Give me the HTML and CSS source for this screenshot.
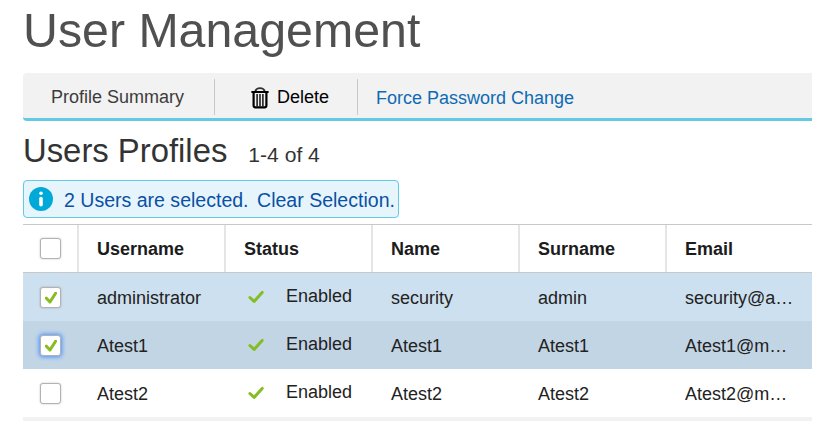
FILE: index.html
```html
<!DOCTYPE html>
<html lang="en">
<head>
<meta charset="utf-8">
<title>User Management</title>
<link rel="stylesheet" href="styles.css">
</head>
<body>
<svg class="defs" width="0" height="0" aria-hidden="true">
  <symbol id="tick" viewBox="0 0 16 14"><path d="M1.9 7.5 6.1 11.4 14.2 2.4" fill="none" stroke="#86bc25" stroke-width="3" stroke-linecap="round" stroke-linejoin="round"/></symbol>
  <symbol id="check" viewBox="0 0 12 12"><path d="M1.4 6.2 5 10 10.6 1.3" fill="none" stroke="#86bc1f" stroke-width="3" stroke-linecap="round" stroke-linejoin="round"/></symbol>
</svg>
<main class="page">
  <h1 class="title">User Management</h1>
  <nav class="toolbar">
    <a class="tool summary">Profile Summary</a>
    <a class="tool delete">
      <svg class="trash" width="18" height="22" viewBox="0 0 18 22"><path d="M4.3 4.2C5 2 6.5 1.2 9 1.2s4 .8 4.7 3" fill="none" stroke="#333" stroke-width="1.8"/><path d="M1.2 5h15.6M2.6 6v12.6q0 1.7 1.7 1.7h9.4q1.7 0 1.7-1.7V6" fill="none" stroke="#000" stroke-width="2.2" stroke-linecap="round"/><path d="M6.1 7v12.5M9 7v12.5M11.9 7v12.5" stroke="#111" stroke-width="1.5"/></svg>
      <span>Delete</span>
    </a>
    <a class="tool force">Force Password Change</a>
  </nav>
  <header class="subhead">
    <h2>Users Profiles</h2>
    <span class="count">1-4 of 4</span>
  </header>
  <div class="notice">
    <svg class="info" width="24" height="24" viewBox="0 0 24 24"><circle cx="12" cy="12" r="12" fill="#00a9d8"/><circle cx="12" cy="6.3" r="1.8" fill="#fff"/><path d="M12 11.5v6.2" stroke="#fff" stroke-width="3.6" stroke-linecap="round"/></svg>
    <span class="message">2 Users are selected.</span>
    <a class="clear">Clear Selection.</a>
  </div>
  <section class="grid">
    <div class="row head">
      <div class="cell pick"><span class="box"></span></div>
      <div class="cell">Username</div>
      <div class="cell">Status</div>
      <div class="cell">Name</div>
      <div class="cell">Surname</div>
      <div class="cell">Email</div>
    </div>
    <div class="row selected">
      <div class="cell pick"><span class="box"><svg width="12" height="12"><use href="#check"/></svg></span></div>
      <div class="cell">administrator</div>
      <div class="cell status"><svg width="16" height="14"><use href="#tick"/></svg><span>Enabled</span></div>
      <div class="cell">security</div>
      <div class="cell">admin</div>
      <div class="cell">security@a…</div>
    </div>
    <div class="row selected current">
      <div class="cell pick"><span class="box focus"><svg width="12" height="12"><use href="#check"/></svg></span></div>
      <div class="cell">Atest1</div>
      <div class="cell status"><svg width="16" height="14"><use href="#tick"/></svg><span>Enabled</span></div>
      <div class="cell">Atest1</div>
      <div class="cell">Atest1</div>
      <div class="cell">Atest1@m…</div>
    </div>
    <div class="row">
      <div class="cell pick"><span class="box"></span></div>
      <div class="cell">Atest2</div>
      <div class="cell status"><svg width="16" height="14"><use href="#tick"/></svg><span>Enabled</span></div>
      <div class="cell">Atest2</div>
      <div class="cell">Atest2</div>
      <div class="cell">Atest2@m…</div>
    </div>
    <div class="next-row"></div>
  </section>
</main>
</body>
</html>
```
FILE: styles.css
```css
* { box-sizing: border-box; }
body {
  margin: 0;
  height: 436px;
  overflow: hidden;
  background: #fff;
  color: #222;
  font: 18px/24px "Liberation Sans", Arial, sans-serif;
}
.defs { display: none; }
.page { width: 789px; margin-left: 23px; }
h1, h2 { margin: 0; font-weight: 400; }
.title {
  height: 73px;
  padding-top: 3px;
  color: #505050;
  font-size: 48.3px;
  line-height: 54px;
}
.toolbar {
  display: flex;
  height: 48px;
  padding-top: 6px;
  background: #f2f2f2;
  border-bottom: 3px solid #63cae3;
  border-radius: 4px 0 0 4px;
}
.tool { height: 36px; line-height: 36px; white-space: nowrap; }
.summary { width: 192px; padding-left: 28px; border-right: 1px solid #c8c8c8; color: #3c3c3c; }
.delete {
  display: flex;
  gap: 8px;
  width: 143px;
  padding-left: 36px;
  border-right: 1px solid #c8c8c8;
  color: #000;
}
.trash { margin-top: 8px; }
.force { padding: 1px 0 0 18px; color: #0f6ab4; }
.subhead {
  display: flex;
  align-items: baseline;
  gap: 21px;
  height: 59px;
  padding-top: 10px;
  color: #333;
}
.subhead h2 { font-size: 32.85px; line-height: 40px; }
.count { font-size: 21.1px; }
.notice {
  display: flex;
  align-items: center;
  width: 376px;
  height: 38px;
  padding-left: 5px;
  border: 1px solid #63cae3;
  border-radius: 4px;
  background: #e6f5fb;
  color: #0b50a5;
  font-size: 19.54px;
  white-space: nowrap;
}
.message { margin: 2px 0 0 11px; }
.clear { margin: 2px 0 0 8.5px; }
.grid { margin-top: 6px; }
.row { display: grid; grid-template-columns: 56px repeat(4, 147px) 145px; height: 48px; }
.cell { padding: 13px 0 0 18px; white-space: nowrap; }
.head {
  height: 49px;
  border-top: 1px solid #c8c8c8;
  border-bottom: 1px solid #c8c8c8;
  color: #1c1c1c;
  font-weight: 700;
}
.head .cell { padding-top: 12px; border-right: 2px solid #e5e5e5; }
.head .cell:last-child { border-right: 0; }
.selected { background: #cde0ef; }
.current { background: #c2d5e5; }
.cell.pick { padding: 13px 0 0 17px; }
.box {
  display: flex;
  align-items: center;
  justify-content: center;
  width: 21px;
  height: 21px;
  margin-top: 1px;
  border: 1px solid #b2b2b2;
  border-radius: 3px;
  background: #fff;
  box-shadow: 0 0 2px rgba(0, 0, 0, .25);
}
.head .box { margin-top: 0; }
.focus { box-shadow: 0 0 4px 1px #4a90ff; }
.cell.status { display: flex; gap: 22px; padding: 11px 0 0 22px; }
.status svg { margin-top: 6px; }
.next-row { height: 4px; background: #f2f2f2; }
```
